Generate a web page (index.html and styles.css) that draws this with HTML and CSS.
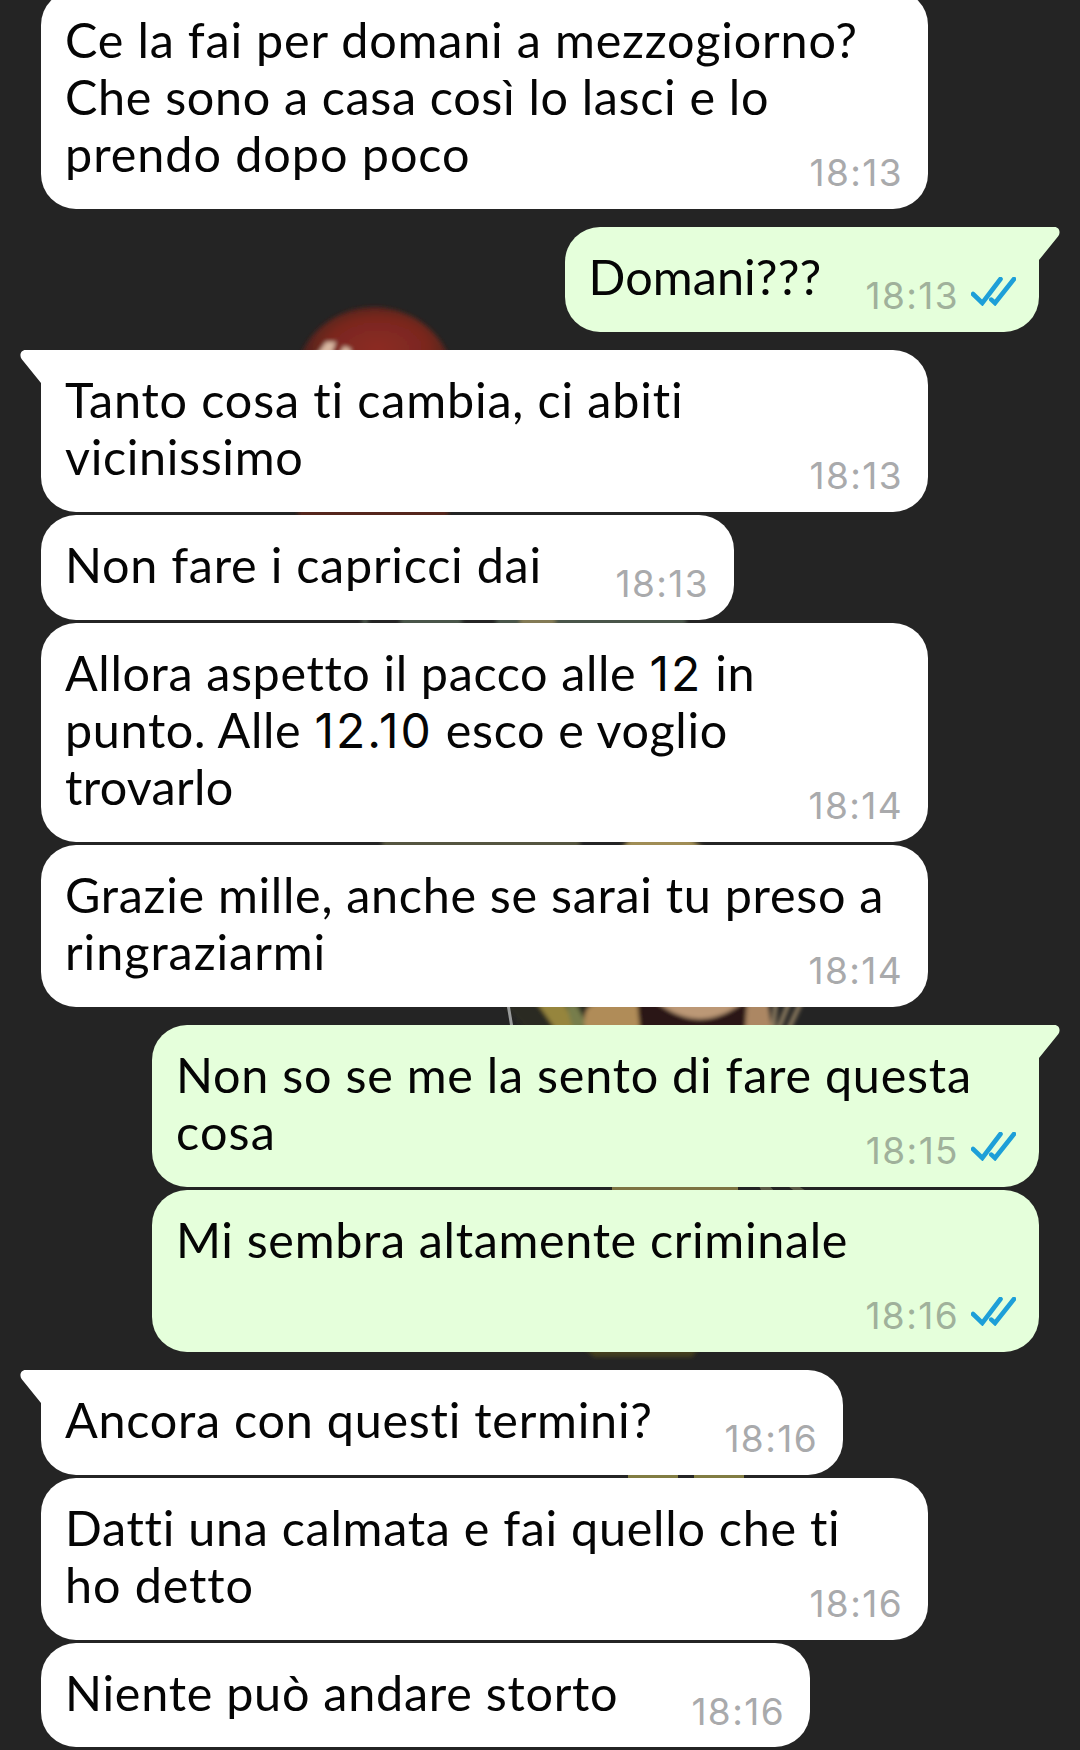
FILE: index.html
```
<!DOCTYPE html>
<html lang="it">
<head>
<meta charset="utf-8">
<title>Chat</title>
<link rel="stylesheet" href="styles.css">
</head>
<body>
<svg class="wallpaper" viewBox="0 0 1080 1750" aria-hidden="true">
  <defs>
    <filter id="soft" x="-20%" y="-20%" width="140%" height="140%"><feGaussianBlur stdDeviation="2"/></filter>
    <radialGradient id="cap" cx="52%" cy="45%" r="55%">
      <stop offset="0" stop-color="#8c2b23"/><stop offset=".6" stop-color="#7a271f"/><stop offset="1" stop-color="#3d211b"/>
    </radialGradient>
  </defs>
  <g filter="url(#soft)">
    <path d="M298 362C308 330 338 307 376 307C412 309 440 330 451 362V400H298Z" fill="url(#cap)"/>
    <path d="M316 356L326 342L336 342L330 358ZM338 356L344 346L351 349L350 358Z" fill="#d9b8a2"/>
    <path d="M298 506H448V520H298Z" fill="#54271f"/>
    <path d="M362 616H368V628H362ZM400 614H462V628H400ZM496 614H686V628H496Z" fill="#4a5548"/>
    <path d="M520 614H555V628H520Z" fill="#837a55"/>
    <path d="M382 838H580V850H382Z" fill="#55543f"/>
    <path d="M620 850L630 838H690L706 850Z" fill="#a08d55"/>
  </g>
  <g filter="url(#soft)">
    <path d="M500 1000H730L716 1030H526Z" fill="#2a2b20"/>
    <path d="M535 1000L556 1030H578L562 1000Z" fill="#96853d"/>
    <path d="M566 1004L573 1030L588 1026L576 1004Z" fill="#777d4b"/>
    <path d="M585 1030Q580 1000 606 1003H641V1030Z" fill="#b08c58"/>
    <path d="M637 1000H748V1030H640Z" fill="#2b1712"/>
    <path d="M654 1000Q700 1038 746 1000Z" fill="#bc9876"/>
    <path d="M747 1003L768 1000L772 1030H745Z" fill="#ac8763"/>
    <path d="M773 1030L776 1000M778 1030L790 1000M788 1030L802 1000" fill="none" stroke="#9a8768" stroke-width="4"/>
  </g>
  <path d="M508 1004L512 1028" stroke="#999b9b" stroke-width="3"/>
  <path d="M612 1184H738V1192H612Z" fill="#7d7342"/>
  <path d="M758 1184H768L775 1192H762ZM785 1184H795L808 1192H796Z" fill="#5b5946"/>
  <path d="M582 1346H700L692 1357H594Z" fill="#443f1f" filter="url(#soft)"/>
  <path d="M628 1474H678V1480H628ZM694 1474H744V1480H694Z" fill="#817c42"/>
</svg>
<svg class="symbols" aria-hidden="true">
  <symbol id="ticks" viewBox="0 0 45 29">
    <path d="M2 17L11.3 26L29.5 2M20.3 22.6L24 26L43 2" fill="none" stroke="currentColor" stroke-width="4.6" stroke-linecap="round" stroke-linejoin="miter"/>
  </symbol>
  <symbol id="tail" viewBox="0 0 42 36">
    <path d="M0 0H36.5C41 0 43 5 40.4 9L21 33V36H0Z" fill="currentColor"/>
  </symbol>
</svg>
<main class="chat">
  <section class="group received">
    <article class="bubble">
      <p class="text"><span style="--ls:.82px">Ce la fai per domani a mezzogiorno?</span><span style="--ls:.66px">Che sono a casa così lo lasci e lo</span><span style="--ls:.95px">prendo dopo poco</span></p>
      <div class="meta"><time>18:13</time></div>
    </article>
  </section>
  <section class="group sent">
    <article class="bubble first" style="--w:474.5px">
      <svg class="tail"><use href="#tail"/></svg>
      <p class="text"><span style="--ls:.1px">Domani???</span></p>
      <div class="meta"><time>18:13</time><svg class="ticks"><use href="#ticks"/></svg></div>
    </article>
  </section>
  <section class="group received">
    <article class="bubble first">
      <svg class="tail"><use href="#tail"/></svg>
      <p class="text"><span style="--ls:.85px">Tanto cosa ti cambia, ci abiti</span><span style="--ls:.65px">vicinissimo</span></p>
      <div class="meta"><time>18:13</time></div>
    </article>
    <article class="bubble" style="--w:693px">
      <p class="text"><span>Non fare i capricci dai</span></p>
      <div class="meta"><time>18:13</time></div>
    </article>
    <article class="bubble">
      <p class="text"><span style="--ls:.62px">Allora aspetto il pacco alle <b>12</b> in</span><span style="--ls:.65px">punto. Alle <b>12.10</b> esco e voglio</span><span style="--ls:.3px">trovarlo</span></p>
      <div class="meta"><time>18:14</time></div>
    </article>
    <article class="bubble">
      <p class="text"><span style="--ls:.7px">Grazie mille, anche se sarai tu preso a</span><span style="--ls:.95px">ringraziarmi</span></p>
      <div class="meta"><time>18:14</time></div>
    </article>
  </section>
  <section class="group sent">
    <article class="bubble first">
      <svg class="tail"><use href="#tail"/></svg>
      <p class="text"><span>Non so se me la sento di fare questa</span><span style="--ls:1.2px">cosa</span></p>
      <div class="meta"><time>18:15</time><svg class="ticks"><use href="#ticks"/></svg></div>
    </article>
    <article class="bubble">
      <p class="text tall"><span style="--ls:.66px">Mi sembra altamente criminale</span></p>
      <div class="meta"><time>18:16</time><svg class="ticks"><use href="#ticks"/></svg></div>
    </article>
  </section>
  <section class="group received">
    <article class="bubble first" style="--w:802px">
      <svg class="tail"><use href="#tail"/></svg>
      <p class="text"><span>Ancora con questi termini?</span></p>
      <div class="meta"><time>18:16</time></div>
    </article>
    <article class="bubble">
      <p class="text"><span style="--ls:.72px">Datti una calmata e fai quello che ti</span><span style="--ls:.9px">ho detto</span></p>
      <div class="meta"><time>18:16</time></div>
    </article>
    <article class="bubble last" style="--w:769px">
      <p class="text"><span>Niente può andare storto</span></p>
      <div class="meta"><time>18:16</time></div>
    </article>
  </section>
</main>
</body>
</html>
```
FILE: styles.css
```
* { box-sizing: border-box; }

body {
  margin: 0;
  height: 1750px;
  overflow: hidden;
  position: relative;
  background: #242424;
  font-family: Lato, "Liberation Sans", sans-serif;
}

.wallpaper { position: absolute; inset: 0; width: 1080px; height: 1750px; }
.symbols { position: absolute; width: 0; height: 0; }

.chat {
  position: relative;
  display: flex;
  flex-direction: column;
  gap: 18px;
  margin-top: -10px;
  padding: 0 41px;
}

.group { display: flex; flex-direction: column; gap: 3px; }
.received { align-items: flex-start; color: #fff; }
.sent { align-items: flex-end; color: #e5ffdb; }

.bubble {
  position: relative;
  display: grid;
  width: var(--w, 887px);
  padding: 21px 24px 27px;
  border-radius: 35px;
  background: currentColor;
}
.received .first { border-top-left-radius: 0; }
.sent .first { border-top-right-radius: 0; }
.last { height: 104px; }

.tail { position: absolute; top: 0; right: -21px; width: 42px; height: 36px; }
.received .tail { right: auto; left: -21px; transform: scaleX(-1); }

.text {
  grid-area: 1 / 1;
  margin: 0;
  color: #050505;
  font-size: 48.5px;
  line-height: 57px;
  font-variant-ligatures: none;
  white-space: nowrap;
}
.text span { display: block; letter-spacing: var(--ls, .75px); }
.text b { font: 400 48px/1 Inter, sans-serif; letter-spacing: 2px; }
.tall { min-height: 114px; }

.meta {
  grid-area: 1 / 1;
  place-self: end;
  display: flex;
  align-items: flex-end;
  gap: 12px;
  margin: 0 1px -11px 0;
  color: #a9aaac;
  font: 400 37px/40px Inter, sans-serif;
  letter-spacing: 1.4px;
}
.sent .meta { margin-right: -1px; color: #a0b19b; }

.ticks { width: 45px; height: 29px; margin-bottom: 10px; color: #1d9fd8; }
```
